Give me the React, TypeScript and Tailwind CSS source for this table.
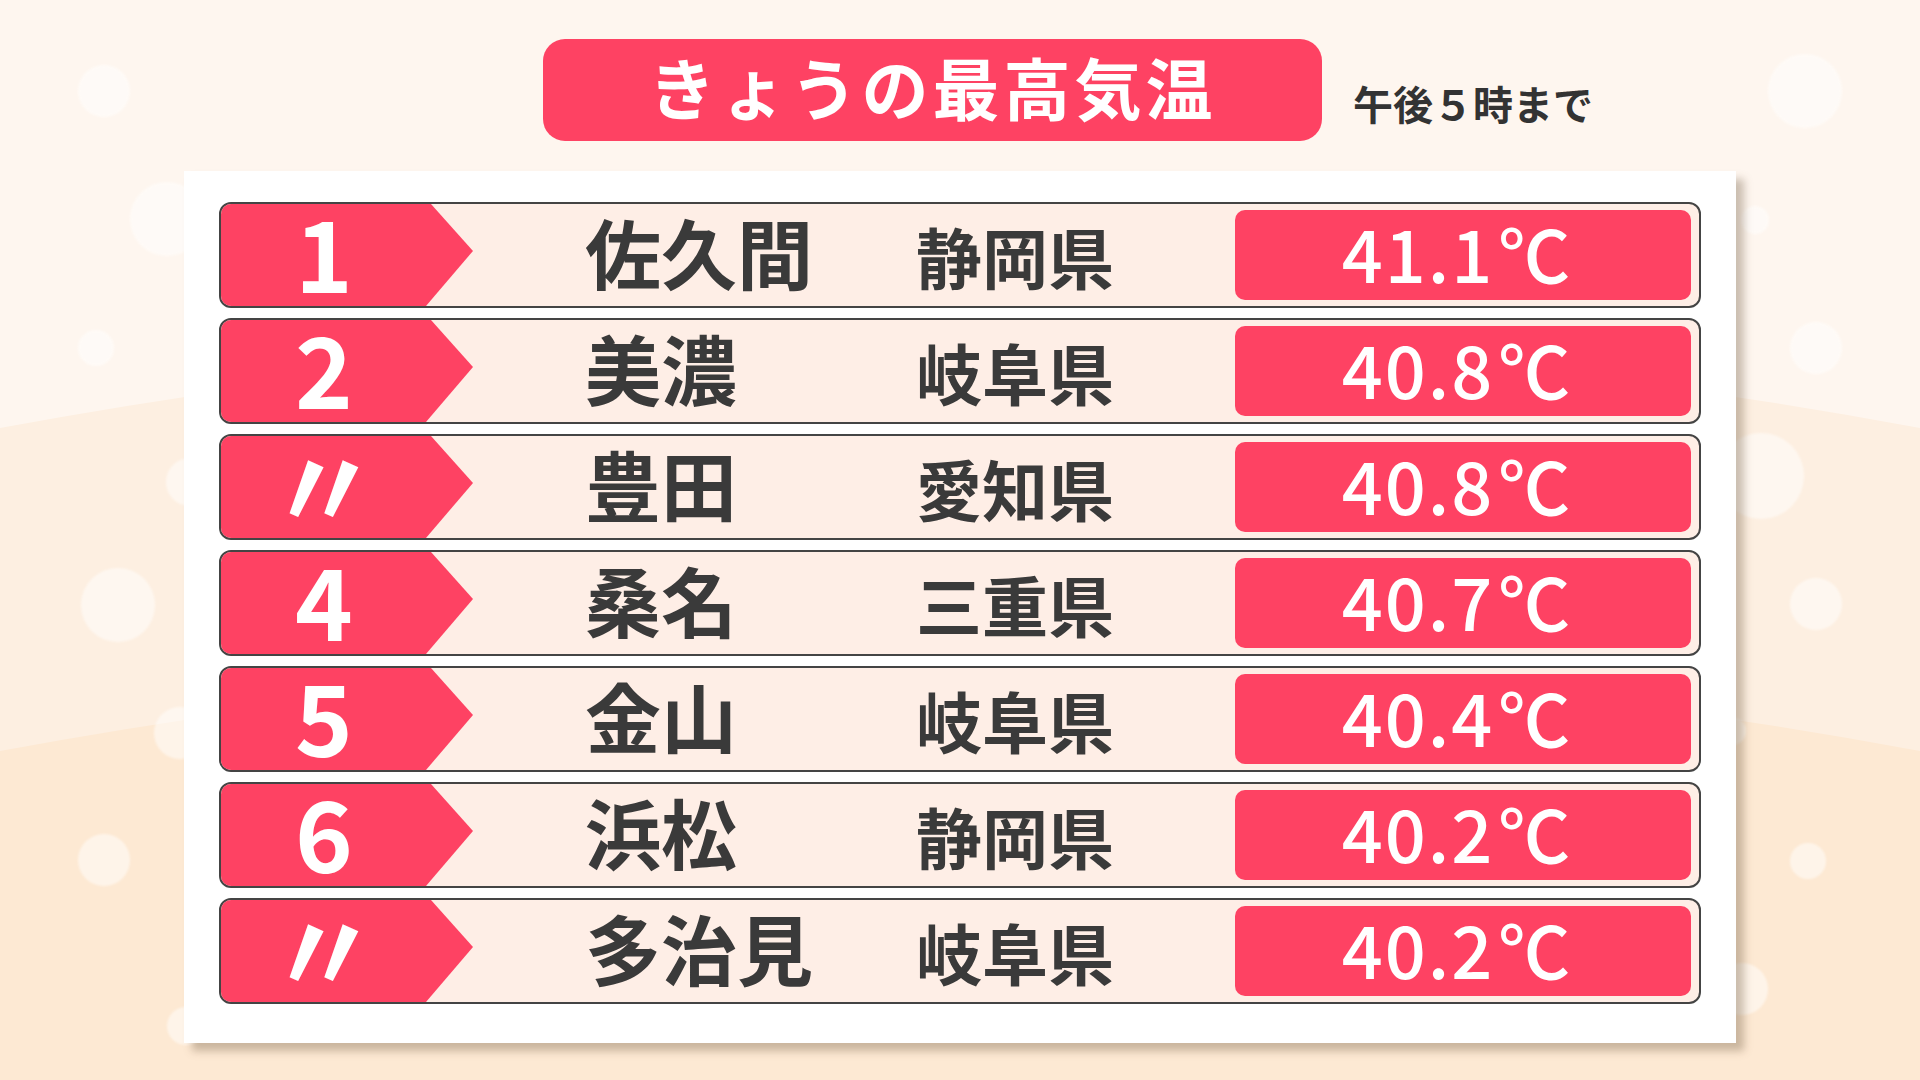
import React from "react";

const rows = [
  { rank: "1", name: "佐久間", pref: "静岡県", temp: "41.1" },
  { rank: "2", name: "美濃", pref: "岐阜県", temp: "40.8" },
  { rank: "〃", name: "豊田", pref: "愛知県", temp: "40.8" },
  { rank: "4", name: "桑名", pref: "三重県", temp: "40.7" },
  { rank: "5", name: "金山", pref: "岐阜県", temp: "40.4" },
  { rank: "6", name: "浜松", pref: "静岡県", temp: "40.2" },
  { rank: "〃", name: "多治見", pref: "岐阜県", temp: "40.2" },
];

const bubbles: [number, number, number][] = [
  [104, 91, 26],
  [167, 219, 37],
  [96, 348, 18],
  [190, 482, 24],
  [118, 605, 37],
  [180, 733, 26],
  [104, 860, 26],
  [186, 1026, 19],
  [1805, 91, 37],
  [1755, 220, 14],
  [1816, 348, 26],
  [1761, 476, 43],
  [1816, 604, 26],
  [1732, 731, 14],
  [1808, 861, 18],
  [1742, 989, 26],
];

function Background() {
  return (
    <svg
      className="absolute inset-0"
      width="1920"
      height="1080"
      viewBox="0 0 1920 1080"
    >
      <defs>
        <filter id="soft" x="-20%" y="-20%" width="140%" height="140%">
          <feGaussianBlur stdDeviation="1.2" />
        </filter>
      </defs>
      <rect x="0" y="0" width="1920" height="1080" fill="#fef6ef" />
      <path d="M0 428 Q960 249 1920 428 L1920 1080 L0 1080 Z" fill="#fdefe1" />
      <path d="M0 751 Q960 572 1920 751 L1920 1080 L0 1080 Z" fill="#fde9d3" />
      {bubbles.map(([cx, cy, r], i) => (
        <circle
          key={i}
          cx={cx}
          cy={cy}
          r={r}
          fill="#ffffff"
          opacity={0.5}
          filter="url(#soft)"
        />
      ))}
    </svg>
  );
}

function Row({
  rank,
  name,
  pref,
  temp,
}: {
  rank: string;
  name: string;
  pref: string;
  temp: string;
}) {
  const ditto = rank === "〃";
  return (
    <div className="flex h-[106px] w-full items-center rounded-[12px] border-2 border-[#444444] bg-[#feeee6]">
      <div className="flex h-full w-[252px] shrink-0 items-center rounded-l-[10px] bg-[#fe4263] [clip-path:polygon(0_0,210px_0,252px_46%,205px_100%,0_100%)]">
        <div className="flex h-full w-[206px] items-center justify-center pb-[10px]">
          {ditto ? (
            <span className="text-[112px] font-bold leading-[0.85] text-white">
              〃
            </span>
          ) : (
            <span className="text-[98px] font-bold leading-[0.9] text-white">
              {rank}
            </span>
          )}
        </div>
      </div>
      <div className="ml-[112px] flex items-baseline pb-[6px]">
        <div className="w-[331px] text-[76px] font-bold leading-[1.1] text-[#3a3a3a]">
          {name}
        </div>
        <div className="text-[66px] font-bold leading-[1.1] text-[#3a3a3a]">
          {pref}
        </div>
      </div>
      <div className="ml-auto mr-[8px] flex h-[90px] w-[456px] items-center justify-center rounded-[10px] bg-[#fe4263] pb-[6px] pr-[14px] text-white">
        <span className="text-[72px] font-medium leading-[1.1] tracking-[2px]">
          {temp}
        </span>
        <span className="ml-[4px] text-[72px] font-medium leading-[1.1]">
          ℃
        </span>
      </div>
    </div>
  );
}

export default function App() {
  return (
    <div className="relative h-[1080px] w-[1920px] overflow-hidden font-['Noto_Sans_CJK_JP','Noto_Sans',sans-serif]">
      <Background />
      <div className="relative flex flex-col">
        <div className="flex items-end pl-[543px] pt-[39px]">
          <div className="flex h-[102px] w-[779px] items-center justify-center rounded-[22px] bg-[#fe4263] pb-[8px]">
            <span className="text-[67px] font-bold leading-[1.1] tracking-[4px] text-white">
              きょうの最高気温
            </span>
          </div>
          <div className="mb-[16px] ml-[31px] text-[40px] font-bold leading-[1.1] text-[#333333]">
            午後５時まで
          </div>
        </div>
        <div className="ml-[184px] mt-[30px] flex h-[872px] w-[1552px] flex-col gap-[10px] bg-white px-[35px] pt-[31px] shadow-[8px_8px_8px_rgba(110,85,60,0.35)]">
          {rows.map((r, i) => (
            <Row key={i} {...r} />
          ))}
        </div>
      </div>
    </div>
  );
}
